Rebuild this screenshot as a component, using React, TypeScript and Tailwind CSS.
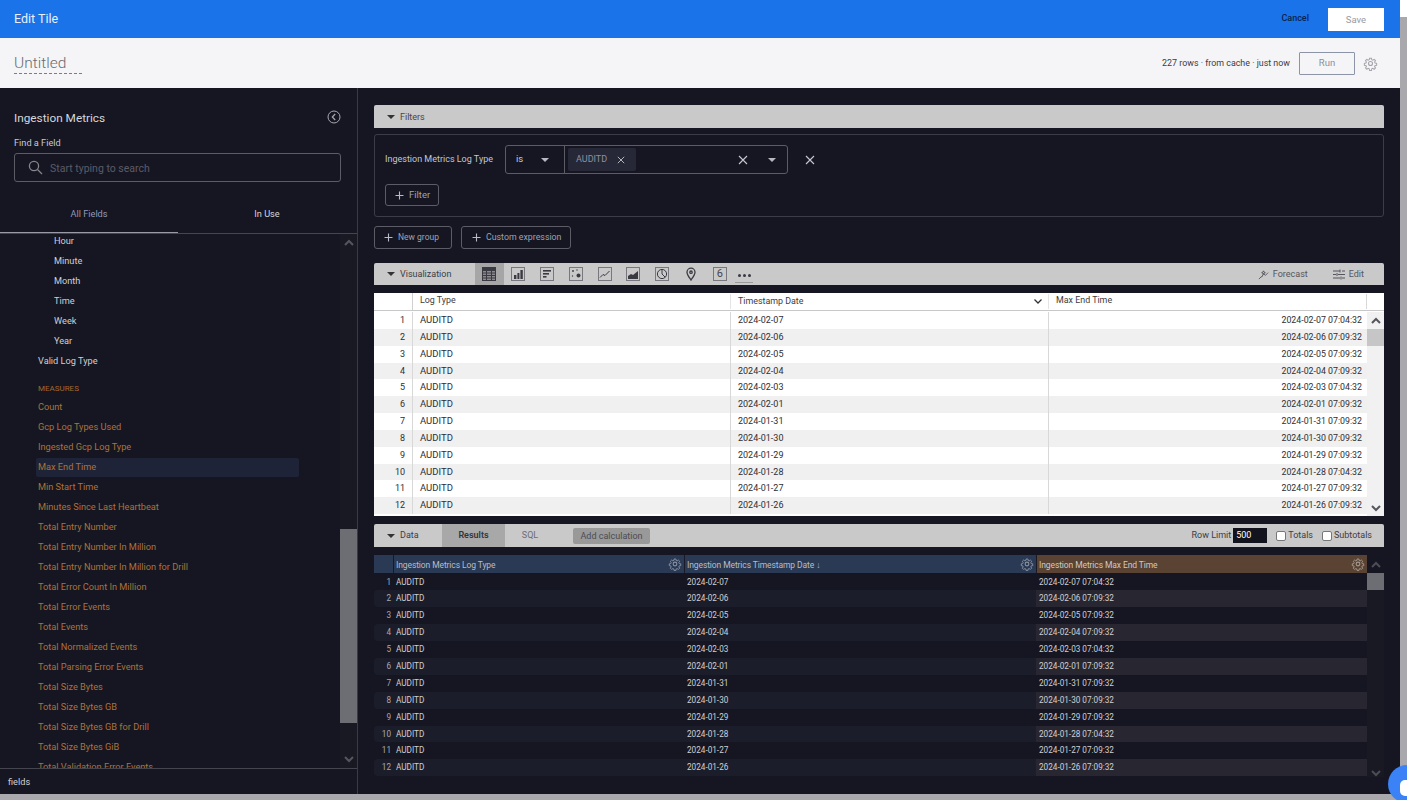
import React from "react";

const F = "[font-family:'Roboto','Noto_Sans',sans-serif]";

const dates = ["2024-02-07","2024-02-06","2024-02-05","2024-02-04","2024-02-03","2024-02-01","2024-01-31","2024-01-30","2024-01-29","2024-01-28","2024-01-27","2024-01-26"];
const times = ["2024-02-07 07:04:32","2024-02-06 07:09:32","2024-02-05 07:09:32","2024-02-04 07:09:32","2024-02-03 07:04:32","2024-02-01 07:09:32","2024-01-31 07:09:32","2024-01-30 07:09:32","2024-01-29 07:09:32","2024-01-28 07:04:32","2024-01-27 07:09:32","2024-01-26 07:09:32"];
const dims = ["Hour","Minute","Month","Time","Week","Year"];
const measures = ["Count","Gcp Log Types Used","Ingested Gcp Log Type","Max End Time","Min Start Time","Minutes Since Last Heartbeat","Total Entry Number","Total Entry Number In Million","Total Entry Number In Million for Drill","Total Error Count In Million","Total Error Events","Total Events","Total Normalized Events","Total Parsing Error Events","Total Size Bytes","Total Size Bytes GB","Total Size Bytes GB for Drill","Total Size Bytes GiB","Total Validation Error Events"];

function X({ s = 10, c = "#c8c8d0" }: { s?: number; c?: string }) {
  return <svg width={s} height={s} viewBox="0 0 10 10" fill="none" stroke={c} strokeWidth="1.1"><path d="M1 1l8 8M9 1l-8 8" /></svg>;
}
function Plus({ c = "#b8bac8" }: { c?: string }) {
  return <svg width="9" height="9" viewBox="0 0 9 9" fill="none" stroke={c} strokeWidth="1.1"><path d="M4.5 0.5v8M0.5 4.5h8" /></svg>;
}
function Caret({ c = "#333" }: { c?: string }) {
  return <svg width="8" height="4" viewBox="0 0 8 4" fill={c}><path d="M0 0h8L4 4z" /></svg>;
}
function Chevron({ up, c = "#55555f" }: { up?: boolean; c?: string }) {
  return <svg width="10" height="7" viewBox="0 0 10 7" fill="none" stroke={c} strokeWidth="2"><path d={up ? "M1 6l4-4 4 4" : "M1 1l4 4 4-4"} /></svg>;
}
function Gear({ c = "#8a8a92", s = 14 }: { c?: string; s?: number }) {
  return (
    <svg width={s} height={s} viewBox="0 0 24 24" fill="none" stroke={c} strokeWidth="1.8">
      <circle cx="12" cy="12" r="3.2" />
      <path d="M10.3 2.5h3.4l.5 2.8 1.9.8 2.4-1.6 2.4 2.4-1.6 2.4.8 1.9 2.8.5v3.4l-2.8.5-.8 1.9 1.6 2.4-2.4 2.4-2.4-1.6-1.9.8-.5 2.8h-3.4l-.5-2.8-1.9-.8-2.4 1.6-2.4-2.4 1.6-2.4-.8-1.9-2.8-.5v-3.4l2.8-.5.8-1.9-1.6-2.4 2.4-2.4 2.4 1.6 1.9-.8z" transform="translate(1.2 1.2) scale(.9)" />
    </svg>
  );
}

function VizIcon({ kind }: { kind: number }) {
  const k = "#3a3a42";
  const box = <rect x="0.5" y="0.5" width="13" height="13" fill="none" stroke="#77777d" />;
  return (
    <svg width="14" height="14" viewBox="0 0 14 14" className="block">
      {kind !== 7 && kind !== 8 && box}
      {kind === 0 && <g stroke={k} strokeWidth="1" fill="none"><rect x="0.5" y="0.5" width="13" height="13" fill="#8b8b8f" /><path d="M.5 3.5h13M.5 6h13M.5 8.5h13M.5 11h13M4.500.5v13M9.500.5v13" /><rect x="0.5" y="0.5" width="13" height="2.5" fill={k} /></g>}
      {kind === 1 && <g fill={k}><rect x="3" y="8" width="2.4" height="4" /><rect x="6.4" y="6" width="2" height="6" /><rect x="9.4" y="3" width="2.4" height="9" /></g>}
      {kind === 2 && <g fill={k}><rect x="3" y="3" width="8" height="1.6" /><rect x="3" y="6" width="6" height="1.6" /><rect x="3" y="9" width="3.5" height="1.6" /></g>}
      {kind === 3 && <g fill={k}><circle cx="4" cy="4" r=".9" /><circle cx="8" cy="3" r=".7" /><circle cx="3.5" cy="9" r=".7" /><circle cx="9.5" cy="8.500" r="2" /></g>}
      {kind === 4 && <path d="M2 10.5l3-3 2 1 4.5-4.5" stroke={k} strokeWidth="1" fill="none" />}
      {kind === 5 && <path d="M2 12V9l3-2 2 1 5-4v8z" fill={k} />}
      {kind === 6 && <g fill="none" stroke={k} strokeWidth="1"><circle cx="7" cy="7" r="4.6" /><path d="M7 2.4V7l3.2 3.2" /></g>}
      {kind === 7 && <g fill="none" stroke={k} strokeWidth="1.3"><path d="M7 13C4.5 9.5 3 7.7 3 5.2a4 4 0 018 0C11 7.7 9.5 9.5 7 13z" /><circle cx="7" cy="5.2" r="1.2" /></g>}
    </svg>
  );
}

function Bar({ children }: { children: React.ReactNode }) {
  return <div className="flex items-center bg-[#c9c9c9] rounded-t-[2px] text-[#3c3c44] text-[9px]">{children}</div>;
}

function LightTable() {
  const lh = "leading-[16.85px]";
  return (
    <div className="mt-2 h-[223px] bg-white text-[#2e2e34] text-[9px] overflow-hidden">
      <div className="flex h-[18px] border-b border-[#c8c8c8] text-[#3c3c44] text-[8.9px]">
        <div className="w-[39px] border-r border-[#d0d0d0]" />
        <div className="w-[318px] pl-[7px] leading-[13px] border-r border-[#e4e4e4] my-[1px]">Log Type</div>
        <div className="w-[318px] pl-[7px] leading-[13px] flex items-center justify-between pr-[6px] border-r border-[#e4e4e4] my-[1px]"><span>Timestamp Date</span><svg width="8" height="5" viewBox="0 0 8 5" fill="none" stroke="#333" strokeWidth="1.3"><path d="M.5 .5L4 4l3.500-3.500" /></svg></div>
        <div className="w-[318px] pl-[7px] leading-[13px] border-r border-[#d8d8d8] my-[1px]">Max End Time</div>
        <div className="flex-1" />
      </div>
      <div className="flex pt-[1px]">
        <div className="w-[993px]">
          {dates.map((d, i) => (
            <div key={d} className={`flex h-[16.85px] ${lh} ${i % 2 ? "bg-[#f0f0f0]" : "bg-white"}`}>
              <div className="w-[39px] text-right pr-[7px] border-r border-[#d8d8d8]">{i + 1}</div>
              <div className="w-[318px] pl-[7px] border-r border-[#d8d8d8] text-[9.5px]">AUDITD</div>
              <div className="w-[318px] pl-[7px] border-r border-[#d8d8d8]">{d}</div>
              <div className="w-[318px] text-right pr-[5px] text-[8.8px]">{times[i]}</div>
            </div>
          ))}
        </div>
        <div className="w-[17px] bg-[#f1f1f1] h-[205px] relative flex flex-col items-center justify-between py-[5px]">
          <Chevron up c="#55555c" />
          <div className="absolute left-0 top-[17px] w-[17px] h-[17px] bg-[#c6c6c6]" />
          <Chevron c="#55555c" />
        </div>
      </div>
    </div>
  );
}

function DarkTable() {
  const lh = "leading-[16.9px]";
  return (
    <div className="mt-2 flex-1 text-[8.2px] text-[#d0d0d4] overflow-hidden">
      <div className="flex h-[18px] text-[#b8bcc8] text-[8.5px] tracking-[-0.1px]">
        <div className="w-[19px] bg-[#2a3a54]" />
        <div className="w-[291px] bg-[#2a3a54] border-l border-[#1a1a26] pl-[2px] flex justify-between items-center pr-[2px]"><span className="mt-[3px]">Ingestion Metrics Log Type</span><Gear c="#8b93a5" /></div>
        <div className="w-[352px] bg-[#2a3a54] border-l border-[#1a1a26] pl-[2px] flex justify-between items-center pr-[2px]"><span className="mt-[3px]">Ingestion Metrics Timestamp Date ↓</span><Gear c="#8b93a5" /></div>
        <div className="w-[331px] bg-[#5a4333] border-l border-[#1a1a26] pl-[2px] flex justify-between items-center pr-[2px] text-[#cfc8c2]"><span className="mt-[3px]">Ingestion Metrics Max End Time</span><Gear c="#a59b92" /></div>
        <div className="flex-1 flex justify-center items-center"><Chevron up c="#4c4c56" /></div>
      </div>
      <div className="flex">
        <div className="w-[993px] pt-[0.5px]">
          {dates.map((d, i) => (
            <div key={d} className={`flex h-[16.9px] ${lh}`}>
              <div className={`w-[19px] text-right pr-[2px] text-[#a8a8b0] ${i % 2 ? "bg-[#1c1d2a]" : ""} rounded-l-[4px]`}>{i + 1}</div>
              <div className={`w-[291px] pl-[3px] ${i % 2 ? "bg-[#1c1d2a]" : ""}`}>AUDITD</div>
              <div className={`w-[352px] pl-[3px] ${i % 2 ? "bg-[#1c1d2a]" : ""}`}>{d}</div>
              <div className={`w-[331px] pl-[3px] ${i % 2 ? "bg-[#282630]" : ""}`}>{times[i]}</div>
            </div>
          ))}
        </div>
        <div className="w-[17px] h-[204px] relative flex flex-col items-center justify-end bg-[#191923]">
          <div className="absolute left-0 top-0 w-[17px] h-[17px] bg-[#6d6d74]" />
          <Chevron c="#4c4c56" />
        </div>
      </div>
    </div>
  );
}

function Sidebar() {
  return (
    <aside className="w-[358px] shrink-0 border-r border-[#3a3a44] flex flex-col text-[#d8d8de]">
      <div className="px-[14px] h-[119px] shrink-0 flex flex-col">
        <div className="flex items-center justify-between mt-[21px] h-[18px]">
          <span className="text-[11.8px] leading-[18px] text-[#d4d6dc]">Ingestion Metrics</span>
          <svg width="14" height="14" viewBox="0 0 14 14" fill="none" stroke="#a8a8b0" strokeWidth="1" className="mr-[2px] -mt-[3px]"><circle cx="7" cy="7" r="6" /><path d="M8.2 4L5.3 7l2.9 3" strokeWidth="1.2" /></svg>
        </div>
        <div className="mt-[9px] text-[9.2px] leading-[14px] text-[#c8c8ce]">Find a Field</div>
        <div className="mt-[3px] h-[29px] w-[327px] border border-[#5c5c66] rounded-[3px] flex items-center pl-[13px]">
          <svg width="15" height="15" viewBox="0 0 15 15" fill="none" stroke="#85858e" strokeWidth="1.3"><circle cx="6" cy="6" r="4.6" /><path d="M9.5 9.5l4.5 4.5" /></svg>
          <span className="ml-[7px] text-[10.5px] text-[#5b5b66] mt-[2px]">Start typing to search</span>
        </div>
      </div>
      <div className="flex shrink-0 border-b border-[#45454f] text-[9.2px] h-[27px]">
        <div className="w-[178px] h-[26px] text-center text-[#9099b8] leading-[14px] border-b border-[#9a9aa6]">All Fields</div>
        <div className="flex-1 text-center text-[#d4d4da] leading-[14px] pr-[1px]">In Use</div>
      </div>
      <div className="relative flex-1 overflow-hidden text-[9.2px]">
        <div className="absolute right-0 top-0 bottom-0 w-[17px] bg-[#191923] flex flex-col items-center justify-between py-[5px]">
          <Chevron up />
          <div className="absolute left-0 top-[295px] w-[17px] h-[194px] bg-[#6d6d74]" />
          <Chevron />
        </div>
        <div>
          {dims.map((d) => <div key={d} className="h-[20px] leading-[14px] pl-[54px] text-[#cfcfd4]">{d}</div>)}
          <div className="h-[20px] leading-[14px] pl-[38px] text-[#cfcfd4]">Valid Log Type</div>
          <div className="h-[16px] mt-[8px] pl-[38px] text-[8px] leading-[14px] text-[#a5682c]">MEASURES</div>
          <div className="mt-[1px]">
            {measures.map((m) => (
              <div key={m} className="h-[20px] leading-[16px] pl-[38px] text-[#ad7236] relative">
                {m === "Max End Time" && <div className="absolute left-[36px] top-[-1px] w-[263px] h-[19px] bg-[#1f2338] rounded-[2px]" />}
                <span className="relative">{m}</span>
              </div>
            ))}
          </div>
        </div>
      </div>
      <div className="h-[26px] shrink-0 border-t border-[#45454f] pl-[8px] text-[9.2px] leading-[25px] text-[#cfcfd4]">fields</div>
    </aside>
  );
}

export default function App() {
  return (
    <div className={`relative w-[1407px] h-[800px] overflow-hidden flex bg-[#a9a9ad] ${F}`}>
      <div className="w-[1400px] h-[794px] flex flex-col shrink-0">
        <header className="h-[38px] shrink-0 bg-[#1a73e8] flex items-center pl-[14px] pr-[16px]">
          <span className="text-[12.5px] text-[#e8f0fd]">Edit Tile</span>
          <span className="ml-auto text-[9px] text-[#0b2350] font-medium">Cancel</span>
          <div className="ml-[19px] w-[56px] h-[23px] bg-white text-center text-[9.5px] leading-[23px] text-[#9a9aa2]">Save</div>
        </header>
        <div className="h-[50px] shrink-0 bg-[#f5f5f7] flex items-center pl-[14px] pr-[22px]">
          <span className="text-[15.5px] leading-[22px] text-[#6a6a72] border-b border-dashed border-[#7a7a90] w-[68px] h-[22px] font-light">Untitled</span>
          <span className="ml-auto text-[8.9px] text-[#3c3c44] mt-[2px]">227 rows · from cache · just now</span>
          <div className="ml-[9px] w-[56px] h-[23px] border border-[#8c94a8] rounded-[1px] text-center text-[9.5px] leading-[20px] text-[#8a90a0] mt-[1px]">Run</div>
          <div className="ml-[8px] mt-[1px]"><Gear c="#a5a5ab" s={15} /></div>
        </div>
        <div className="flex-1 min-h-0 flex bg-[#161622]">
          <Sidebar />
          <main className="flex-1 min-w-0 pl-[16px] pr-[16px] pt-[17px] flex flex-col">
            <Bar>
              <div className="h-[23px] flex items-center pl-[13px] gap-[5px]"><Caret /><span className="text-[#45454d] mt-[2px]">Filters</span></div>
            </Bar>
            <div className="mt-[6px] h-[83px] border border-[#3c3c48] rounded-[3px] px-[10px] pt-[10px]">
              <div className="flex items-center">
                <span className="text-[9px] text-[#c4c6d0] w-[120px] whitespace-nowrap">Ingestion Metrics Log Type</span>
                <div className="h-[29px] w-[283px] border border-[#5c5c66] rounded-[3px] flex items-center">
                  <div className="w-[59px] h-full border-r border-[#5c5c66] flex items-center pl-[10px] gap-[18px] text-[9.5px] text-[#c8c8d0]"><span>is</span><Caret c="#b8b8c0" /></div>
                  <div className="ml-[3px] h-[23px] w-[68px] bg-[#262838] rounded-[2px] flex items-center pl-[8px] gap-[10px] text-[9px] text-[#8e90a0]"><span>AUDITD</span><X s={8} /></div>
                  <div className="ml-auto mr-[11px] flex items-center gap-[20px]"><X s={10} /><Caret c="#b8b8c0" /></div>
                </div>
                <div className="ml-[17px]"><X s={10} /></div>
              </div>
              <div className="mt-[10px] w-[54px] h-[22px] border border-[#5c5c66] rounded-[3px] flex items-center pl-[9px] gap-[5px] text-[9.5px] text-[#9ea2b4]"><Plus /><span>Filter</span></div>
            </div>
            <div className="mt-[9px] flex gap-[9px]">
              <div className="w-[78px] h-[23px] border border-[#5c5c66] rounded-[3px] flex items-center pl-[9px] gap-[5px] text-[8.5px] text-[#9ea2b4]"><Plus /><span>New group</span></div>
              <div className="w-[110px] h-[23px] border border-[#5c5c66] rounded-[3px] flex items-center pl-[10px] gap-[5px] text-[8.8px] text-[#9ea2b4] whitespace-nowrap"><Plus /><span>Custom expression</span></div>
            </div>
            <div className="mt-[14px]">
              <Bar>
                <div className="h-[22px] w-[101px] flex items-center pl-[13px] gap-[5px]"><Caret /><span className="mt-[1px]">Visualization</span></div>
                <div className="flex items-center h-[22px]">
                  {[0,1,2,3,4,5,6,7].map((k) => (
                    <div key={k} className={`h-full w-[28.8px] flex items-center justify-center ${k === 0 ? "bg-[#a6a6a6]" : ""}`}><VizIcon kind={k} /></div>
                  ))}
                  <div className="h-full w-[28.8px] flex items-center justify-center"><div className="w-[14px] h-[14px] border border-[#77777d] text-center text-[11px] leading-[12px] text-[#45454d]">6</div></div>
                  <div className="ml-[1px] w-[18px] h-[14px] mt-[3px] flex items-center justify-center gap-[2px] border-b border-[#9a9a9a]">
                    <span className="w-[3px] h-[3px] rounded-full bg-[#3a3a42]" />
                    <span className="w-[3px] h-[3px] rounded-full bg-[#3a3a42]" />
                    <span className="w-[3px] h-[3px] rounded-full bg-[#3a3a42]" />
                  </div>
                </div>
                <div className="ml-auto flex items-center pr-[20px] text-[#55555c]">
                  <svg width="11" height="11" viewBox="0 0 12 12" fill="none" stroke="#55555c" strokeWidth="1"><path d="M1 11l3-3M4 9l2-4 2 2 3-3M6 2l.6 1.4L8 4l-1.4.6L6 6l-.6-1.4L4 4l1.4-.6z" /></svg>
                  <span className="ml-[4px] mt-[1px]">Forecast</span>
                  <svg className="ml-[25px]" width="12" height="11" viewBox="0 0 12 11" fill="none" stroke="#55555c" strokeWidth="1"><path d="M0 2h7M9 2h3M7 .5v3M0 5.500h3M5 5.500h7M4 4v3M0 9h7M9 9h3M8 7.500v3" /></svg>
                  <span className="ml-[4px] mt-[1px]">Edit</span>
                </div>
              </Bar>
            </div>
            <LightTable />
            <div className="mt-2">
              <Bar>
                <div className="h-[23px] w-[68px] flex items-center pl-[13px] gap-[5px]"><Caret /><span>Data</span></div>
                <div className="h-[23px] w-[63px] bg-[#a8a8a8] text-center leading-[23px] font-semibold text-[#33333a]">Results</div>
                <div className="w-[50px] text-center text-[#6c6c72]">SQL</div>
                <div className="ml-[18px] h-[16px] w-[77px] bg-[#999999] rounded-[2px] text-center leading-[16px] text-[#4c4c54]">Add calculation</div>
                <div className="ml-auto flex items-center pr-[12px] text-[#3c3c44]">
                  <span>Row Limit</span>
                  <div className="ml-[2px] w-[34px] h-[15px] bg-[#13131e] text-white text-[9px] leading-[15px] pl-[3px]">500</div>
                  <div className="ml-[9px] w-[10px] h-[10px] bg-white border border-[#777] rounded-[2px]" />
                  <span className="ml-[2px]">Totals</span>
                  <div className="ml-[9px] w-[10px] h-[10px] bg-white border border-[#777] rounded-[2px]" />
                  <span className="ml-[2px]">Subtotals</span>
                </div>
              </Bar>
            </div>
            <DarkTable />
          </main>
        </div>
      </div>
      <div className="flex-1 flex flex-col">
        <div className="h-[17px] bg-white" />
        <div className="flex-1 bg-[#a9a9ad]" />
      </div>
      <div className="absolute left-[1388px] top-[765px] w-[38px] h-[38px] rounded-full bg-[#3b82f6]">
        <div className="absolute left-[12px] top-[15px] w-[14px] h-[16px] rounded-[5px] bg-white" />
      </div>
    </div>
  );
}
